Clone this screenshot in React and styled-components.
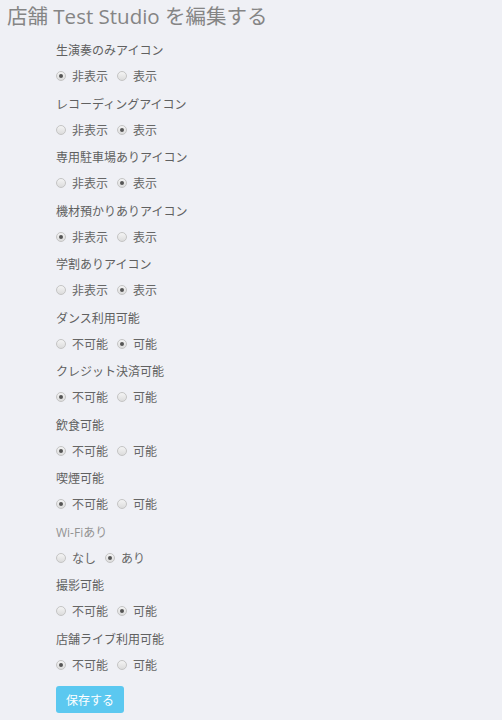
import {styled, createGlobalStyle} from "styled-components";

const GlobalStyle = createGlobalStyle`
	body {
		margin: 0;
		background-color: #eff0f5;
		font-family: "Open Sans", "Noto Sans CJK JP", sans-serif;
	}
`

const Page = styled.div`
	width: 502px;
	min-height: 720px;
`

const Title = styled.h1`
	margin: 0;
	padding: 1px 0 0 7px;
	font-size: 20.5px;
	line-height: 30px;
	font-weight: 400;
	color: #858585;
`

const Form = styled.form`
	padding: 10px 0 0 56px;
	display: flex;
	flex-direction: column;
`

const Group = styled.div`
	display: flex;
	flex-direction: column;
	gap: 5px;
	margin-bottom: 8.5px;
`

const Label = styled.div`
	font-size: 12px;
	line-height: 20px;
	color: ${p => p.$light ? '#939393' : '#606060'};
`

const Options = styled.div`
	display: flex;
	align-items: center;
	height: 20px;
`

const Option = styled.label`
	display: flex;
	align-items: center;
	gap: 6px;
	margin-right: 9px;
	font-size: 12px;
	color: #666;
`

const Radio = styled.span`
	width: 10px;
	height: 10px;
	box-sizing: border-box;
	border-radius: 50%;
	border: 1px solid #c4c4c4;
	background: linear-gradient(#f4f4f4, #dcdcdc);
	display: grid;
	place-items: center;

	&::after {
		content: "";
		width: 4px;
		height: 4px;
		border-radius: 50%;
		background: #555;
		display: ${p => p.$checked ? 'block' : 'none'};
	}
`

const SaveButton = styled.button`
	align-self: flex-start;
	margin-top: 3px;
	width: 68px;
	height: 27px;
	border: none;
	border-radius: 3px;
	background-color: #5bc8f0;
	color: #fff;
	font-family: inherit;
	font-size: 12px;
	padding: 0;
`

const fields = [
	{label: '生演奏のみアイコン', options: ['非表示', '表示'], value: 0},
	{label: 'レコーディングアイコン', options: ['非表示', '表示'], value: 1},
	{label: '専用駐車場ありアイコン', options: ['非表示', '表示'], value: 1},
	{label: '機材預かりありアイコン', options: ['非表示', '表示'], value: 0},
	{label: '学割ありアイコン', options: ['非表示', '表示'], value: 1},
	{label: 'ダンス利用可能', options: ['不可能', '可能'], value: 1},
	{label: 'クレジット決済可能', options: ['不可能', '可能'], value: 0},
	{label: '飲食可能', options: ['不可能', '可能'], value: 0},
	{label: '喫煙可能', options: ['不可能', '可能'], value: 0},
	{label: 'Wi-Fiあり', options: ['なし', 'あり'], value: 1, light: true},
	{label: '撮影可能', options: ['不可能', '可能'], value: 1},
	{label: '店舗ライブ利用可能', options: ['不可能', '可能'], value: 0},
]

export default function App() {
	return (
		<>
			<GlobalStyle />
			<Page>
				<Title>店舗 Test Studio を編集する</Title>
				<Form onSubmit={e => e.preventDefault()}>
					{fields.map(field => (
						<Group key={field.label}>
							<Label $light={field.light}>{field.label}</Label>
							<Options>
								{field.options.map((opt, i) => (
									<Option key={opt}>
										<Radio $checked={i === field.value} />
										{opt}
									</Option>
								))}
							</Options>
						</Group>
					))}
					<SaveButton type="submit">保存する</SaveButton>
				</Form>
			</Page>
		</>
	)
}
